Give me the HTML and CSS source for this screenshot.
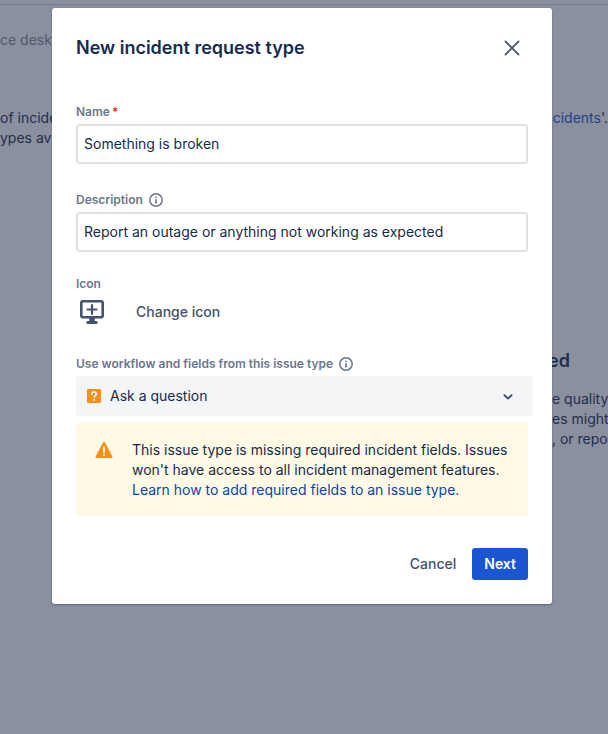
FILE: index.html
```html
<!DOCTYPE html>
<html lang="en">
<head>
    <meta charset="UTF-8">
    <meta name="viewport" content="width=device-width, initial-scale=1.0">
    <title>New incident request type</title>
    <link rel="stylesheet" href="styles.css">
</head>
<body>
    <div class="page">
        <div class="breadcrumb">ce desk</div>
        <div class="intro">
            <p>of incide<br>ypes ava</p>
            <p><a href="#">ncidents</a>'.</p>
        </div>
        <div class="aside">
            <h2>ed</h2>
            <p>e quality<br>es might<br>, or repor</p>
        </div>
    </div>

    <div class="overlay">
        <form class="modal" role="dialog" aria-labelledby="modal-title">
            <div class="modal-header">
                <h1 id="modal-title">New incident request type</h1>
                <button type="button" class="close" aria-label="Close">
                    <svg width="16" height="16" viewBox="0 0 16 16"><path d="M1.5 1.5l13 13M14.5 1.5l-13 13" stroke="#505676" stroke-width="1.8" stroke-linecap="round"/></svg>
                </button>
            </div>

            <div class="field">
                <label for="name">Name<span class="required">*</span></label>
                <input type="text" id="name" value="Something is broken">
            </div>

            <div class="field">
                <label for="description">Description
                    <svg class="info" width="14" height="14" viewBox="0 0 14 14"><circle cx="7" cy="7" r="6.2" fill="none" stroke="#6b778c" stroke-width="1.5"/><circle cx="7" cy="4.3" r="0.9" fill="#6b778c"/><path d="M7 6.8v3" stroke="#6b778c" stroke-width="1.7" stroke-linecap="round"/></svg>
                </label>
                <input type="text" id="description" value="Report an outage or anything not working as expected">
            </div>

            <div class="field icon-field">
                <span class="label">Icon</span>
                <div class="icon-row">
                    <svg width="24" height="24" viewBox="0 0 24 24">
                        <rect x="1.3" y="1.3" width="21.4" height="16" rx="1.8" fill="none" stroke="#44526e" stroke-width="2.6"/>
                        <path d="M12 5v9M7.5 9.5h9" stroke="#44526e" stroke-width="2.2" stroke-linecap="round"/>
                        <path d="M9.2 17.5h5.6v3.4h1.4a1.5 1.5 0 0 1 0 3H7.8a1.5 1.5 0 0 1 0-3h1.4z" fill="#44526e"/>
                    </svg>
                    <button type="button" class="text-button">Change icon</button>
                </div>
            </div>

            <div class="field issue-field">
                <label for="issue-type">Use workflow and fields from this issue type
                    <svg class="info" width="14" height="14" viewBox="0 0 14 14"><circle cx="7" cy="7" r="6.2" fill="none" stroke="#6b778c" stroke-width="1.5"/><circle cx="7" cy="4.3" r="0.9" fill="#6b778c"/><path d="M7 6.8v3" stroke="#6b778c" stroke-width="1.7" stroke-linecap="round"/></svg>
                </label>
                <div class="select">
                    <svg class="type-icon" width="14" height="14" viewBox="0 0 14 14"><rect width="14" height="14" rx="1" fill="#f79019"/><path d="M4.7 5.2C4.7 3.7 5.7 2.9 7 2.9s2.3.8 2.3 2.1c0 1.6-2.1 1.6-2.1 3.2" fill="none" stroke="#fff" stroke-width="1.5" stroke-linecap="round"/><circle cx="7.1" cy="10.8" r="1" fill="#fff"/></svg>
                    <select id="issue-type">
                        <option>Ask a question</option>
                    </select>
                    <svg class="chevron" width="10" height="6" viewBox="0 0 10 6"><path d="M1.5 1.2L5 4.6l3.5-3.4" fill="none" stroke="#44526e" stroke-width="2" stroke-linecap="round" stroke-linejoin="round"/></svg>
                </div>
            </div>

            <div class="warning">
                <svg width="18" height="18" viewBox="0 0 18 18"><path d="M8.1 1.2a1 1 0 0 1 1.8 0l7.5 14.3a1 1 0 0 1-.9 1.5h-15a1 1 0 0 1-.9-1.5z" fill="#f79019"/><path d="M9 6.4v4.4" stroke="#fffae6" stroke-width="2" stroke-linecap="round"/><circle cx="9" cy="14" r="1.1" fill="#fffae6"/></svg>
                <p>This issue type is missing required incident fields. Issues won't have access to all incident management features. <br><a href="#">Learn how to add required fields to an issue type</a>.</p>
            </div>

            <div class="modal-footer">
                <button type="button" class="text-button">Cancel</button>
                <button type="submit" class="primary">Next</button>
            </div>
        </form>
    </div>
</body>
</html>
```

FILE: styles.css
```css
* {
    box-sizing: border-box;
}
body {
    margin: 0;
    min-height: 100vh;
    background: #8a90a0;
    color: #172b4d;
    font-family: Inter, "Liberation Sans", sans-serif;
    font-size: 14px;
    line-height: 20px;
    overflow-x: hidden;
}
h1, h2, p {
    margin: 0;
}
button, input, select {
    font: inherit;
    color: inherit;
}

/* page behind the dialog */
.page {
    position: absolute;
    top: 4px;
    left: 0;
    right: 0;
    border-top: 1px solid #777d90;
    color: #222e4c;
    white-space: nowrap;
}
.breadcrumb {
    padding-top: 25px;
    color: #4e586f;
}
.intro {
    display: flex;
    justify-content: space-between;
    padding-top: 58px;
}
.intro a {
    color: #1d428a;
    text-decoration: none;
}
.aside {
    display: flex;
    flex-direction: column;
    width: 60px;
    margin-left: auto;
    padding-top: 201px;
}
.aside h2 {
    margin-bottom: 16px;
    font-size: 18px;
    font-weight: 600;
    line-height: 24px;
}
.aside p {
    padding-left: 4px;
}

/* dialog */
.overlay {
    position: relative;
    display: flex;
    justify-content: center;
    padding: 8px 56px 8px 52px;
}
.modal {
    width: 100%;
    max-width: 500px;
    padding: 24px;
    background: #fff;
    border-radius: 3px;
    box-shadow: 0 1px 2px rgba(9, 30, 66, 0.4);
}
.modal-header {
    display: flex;
    justify-content: space-between;
    align-items: center;
    height: 32px;
    margin-bottom: 40px;
}
h1 {
    font-size: 18px;
    font-weight: 600;
    line-height: 24px;
}
.close {
    display: flex;
    padding: 8px;
    background: none;
    border: none;
    cursor: pointer;
}
.field {
    margin-bottom: 28px;
}
label, .label {
    display: flex;
    align-items: center;
    height: 16px;
    margin-bottom: 4px;
    color: #6b778c;
    font-size: 12px;
    font-weight: 600;
    line-height: 16px;
}
.required {
    margin-left: 2px;
    color: #de350b;
}
.info {
    margin-left: 6px;
}
input {
    display: block;
    width: 100%;
    height: 40px;
    padding: 0 6px 2px;
    background: #fff;
    border: 2px solid #dfe1e6;
    border-radius: 3px;
}
#name, #description {
    margin-top: 4px;
}
.icon-field {
    margin-top: -4px;
}
.icon-row {
    display: flex;
    align-items: center;
    gap: 20px;
    height: 32px;
    padding-left: 4px;
}
.text-button {
    height: 32px;
    padding: 0 12px;
    background: none;
    border: none;
    color: #42526e;
    font-weight: 500;
    cursor: pointer;
}
.issue-field {
    margin-bottom: 7px;
}
.select {
    position: relative;
    margin-right: -5px;
}
select {
    display: block;
    width: 100%;
    height: 40px;
    padding: 0 34px;
    appearance: none;
    background: #f4f5f7;
    border: none;
    border-radius: 3px;
}
.type-icon, .chevron {
    position: absolute;
    top: 13px;
    left: 11px;
    pointer-events: none;
}
.chevron {
    top: 18px;
    left: auto;
    right: 20px;
}
.warning {
    display: flex;
    gap: 19px;
    padding: 17px 12px 16px 19px;
    background: #fffae6;
}
.warning svg {
    flex: none;
    margin-top: 1px;
}
.warning a {
    color: #0747a6;
    text-decoration: none;
}
.modal-footer {
    display: flex;
    justify-content: flex-end;
    gap: 4px;
    margin-top: 32px;
}
.primary {
    height: 32px;
    padding: 0 12px;
    background: #1a56cf;
    border: none;
    border-radius: 3px;
    color: #fff;
    font-weight: 600;
    cursor: pointer;
}
```
